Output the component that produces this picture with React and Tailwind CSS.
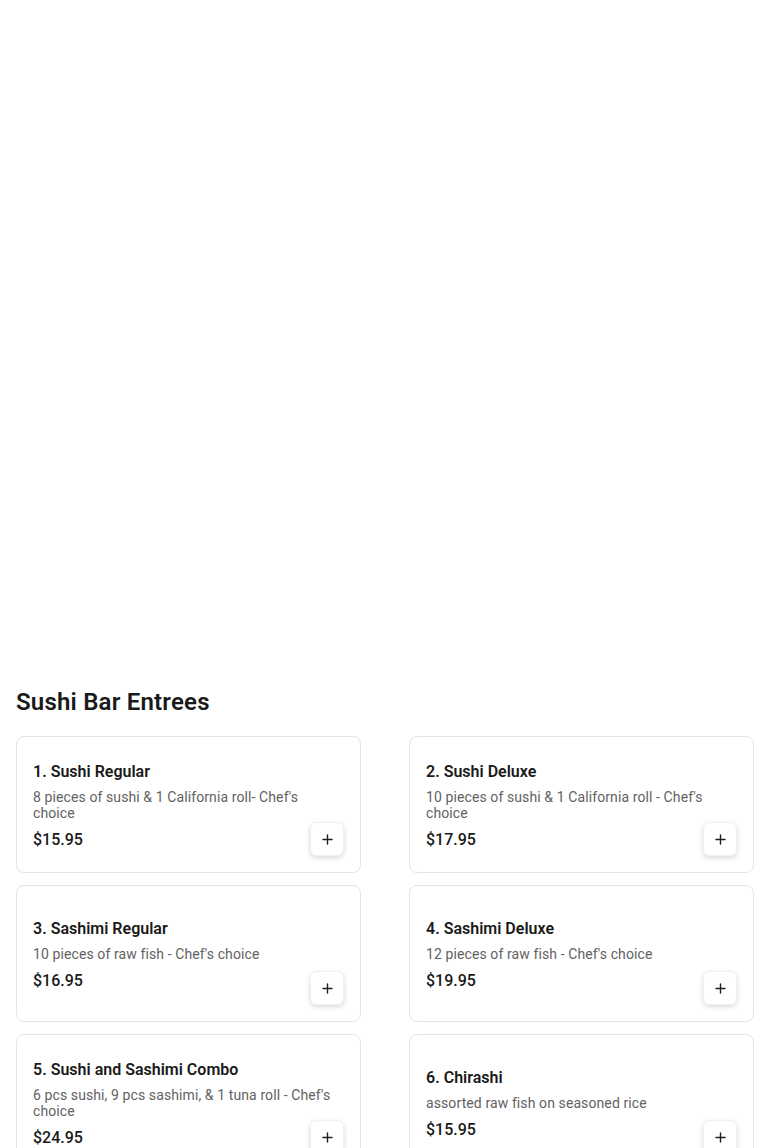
const items = [
  { name: '1. Sushi Regular', desc: "8 pieces of sushi & 1 California roll- Chef's choice", price: '$15.95' },
  { name: '2. Sushi Deluxe', desc: "10 pieces of sushi & 1 California roll - Chef's choice", price: '$17.95' },
  { name: '3. Sashimi Regular', desc: "10 pieces of raw fish - Chef's choice", price: '$16.95' },
  { name: '4. Sashimi Deluxe', desc: "12 pieces of raw fish - Chef's choice", price: '$19.95' },
  { name: '5. Sushi and Sashimi Combo', desc: "6 pcs sushi, 9 pcs sashimi, & 1 tuna roll - Chef's choice", price: '$24.95' },
  { name: '6. Chirashi', desc: 'assorted raw fish on seasoned rice', price: '$15.95' },
];

function PlusIcon() {
  return (
    <svg width="11" height="11" viewBox="0 0 11 11" fill="none">
      <path d="M5.5 1v9M1 5.5h9" stroke="#1f1f1f" strokeWidth="1.4" strokeLinecap="round" />
    </svg>
  );
}

export default function App() {
  return (
    <div className="bg-white min-h-screen font-['Roboto',sans-serif] text-[#1a1a1a]">
      {/* image area left blank */}
      <div className="h-[686px]" />

      <section className="px-4">
        <h2 className="text-2xl leading-8 font-semibold tracking-[0.2px]">Sushi Bar Entrees</h2>

        <div className="mt-[18px] grid grid-cols-2 gap-x-12 gap-y-3">
          {items.map((item) => (
            <div
              key={item.name}
              className="relative flex items-center min-h-[137px] border border-[#e4e4e4] rounded-lg px-4 py-4"
            >
              <div className="pr-[6px] translate-y-[1px]">
                <h3 className="text-base leading-6 font-semibold">{item.name}</h3>
                <p className="mt-[5px] text-sm leading-4 tracking-[0.1px] text-[#626262]">{item.desc}</p>
                <div className="mt-[7px] text-base leading-6 font-medium">{item.price}</div>
              </div>
              <button className="absolute right-4 bottom-4 w-[34px] h-[34px] flex items-center justify-center bg-white rounded-md border border-[#f0f0f0] shadow-[0_2px_5px_rgba(0,0,0,0.15)]">
                <PlusIcon />
              </button>
            </div>
          ))}
        </div>
      </section>
    </div>
  );
}
